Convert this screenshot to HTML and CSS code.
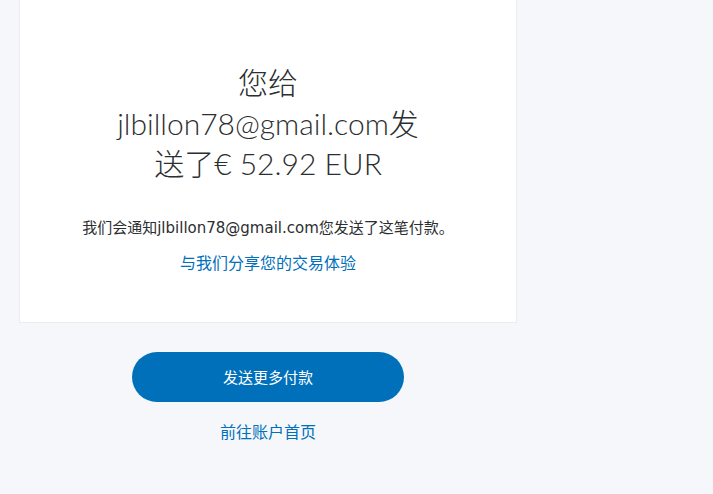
FILE: index.html
```html
<!DOCTYPE html>
<html lang="zh-CN">
<head>
<meta charset="utf-8">
<title>付款已发送</title>
<link rel="stylesheet" href="styles.css">
</head>
<body>
<main class="page">
  <section class="card">
    <h1 class="title">您给<br>jlbillon78@gmail.com发送了€ 52.92 EUR</h1>
    <p class="note">我们会通知jlbillon78@gmail.com您发送了这笔付款。</p>
    <a class="link share" href="#">与我们分享您的交易体验</a>
  </section>
  <div class="actions">
    <a class="btn" href="#">发送更多付款</a>
    <a class="link home" href="#">前往账户首页</a>
  </div>
</main>
</body>
</html>
```
FILE: styles.css
```css
html, body {
  margin: 0;
  padding: 0;
  background: #f5f7fa;
}
body {
  font-family: "Open Sans", "Noto Sans CJK SC", sans-serif;
  color: #2c2e2f;
}
.page {
  width: 498px;
  margin-left: 19px;
  display: flex;
  flex-direction: column;
}
.card {
  background: #ffffff;
  border: 1px solid #eaeced;
  border-top: none;
  padding: 62px 40px 48px;
  display: flex;
  flex-direction: column;
  align-items: center;
  text-align: center;
}
.title {
  margin: 0;
  width: 320px;
  font-family: "Lato", "Noto Sans CJK SC", sans-serif;
  font-weight: 300;
  font-size: 30px;
  line-height: 40.5px;
  color: #2c2e2f;
}
.note {
  margin: 33px 0 0;
  font-family: "DejaVu Sans", "Noto Sans CJK SC", sans-serif;
  font-size: 15px;
  line-height: 22px;
  white-space: nowrap;
}
.link {
  color: #0070ba;
  text-decoration: none;
  font-size: 16px;
  line-height: 22px;
}
.share {
  margin-top: 13px;
}
.actions {
  display: flex;
  flex-direction: column;
  align-items: center;
  padding-top: 29px;
}
.btn {
  width: 272px;
  height: 50px;
  border-radius: 25px;
  background: #0070ba;
  color: #ffffff;
  text-decoration: none;
  font-size: 15px;
  display: flex;
  align-items: center;
  justify-content: center;
}
.home {
  margin-top: 19px;
  font-size: 16px;
}
```
